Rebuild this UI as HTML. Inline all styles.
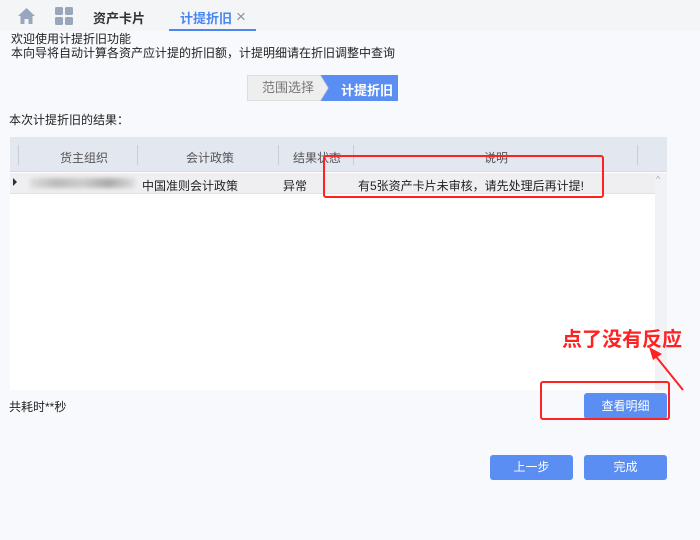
<!DOCTYPE html>
<html><head><meta charset="utf-8"><style>
*{margin:0;padding:0;box-sizing:border-box}
body{width:700px;height:540px;background:#f8f9fc;font-family:"Liberation Sans","Noto Sans CJK SC",sans-serif;font-size:12px;color:#222;position:relative;overflow:hidden}
.a{position:absolute}
.btn{position:absolute;background:#5b8ef2;color:#fff;border-radius:3px;text-align:center;font-size:12px}
.red{position:absolute;border:2.5px solid #f22;border-radius:3px}
</style></head><body>
<div class="a" style="left:0;top:0;width:700px;height:31px;background:#f4f5f7"></div>
<svg class="a" style="left:17px;top:7px" width="19" height="18" viewBox="0 0 19 18"><path d="M9.5 1 L1 9 H3.5 V17 H7.5 V12 H11.5 V17 H15.5 V9 H18 Z" fill="#9aa6bd"/></svg>
<svg class="a" style="left:55px;top:7px" width="18" height="18"><rect x="0" y="0" width="8" height="8" rx="1.5" fill="#9aa6bd"/><rect x="10" y="0" width="8" height="8" rx="1.5" fill="#9aa6bd"/><rect x="0" y="10" width="8" height="8" rx="1.5" fill="#9aa6bd"/><rect x="10" y="10" width="8" height="8" rx="1.5" fill="#9aa6bd"/></svg>
<div class="a" style="left:93px;top:8px;font-size:13px;font-weight:bold;color:#333">资产卡片</div>
<div class="a" style="left:180px;top:8px;font-size:13px;font-weight:bold;color:#4a86ef">计提折旧</div>
<div class="a" style="left:236px;top:7px;font-size:17px;line-height:20px;color:#8a93a3">×</div>
<div class="a" style="left:169px;top:29px;width:87px;height:2px;background:#4e86f0"></div>
<div class="a" style="left:11px;top:32px;line-height:14px">欢迎使用计提折旧功能<br>本向导将自动计算各资产应计提的折旧额，计提明细请在折旧调整中查询</div>
<div class="a" style="left:247px;top:75px;width:80px;height:26px;background:#eeeeee;border:1px solid #ddd;color:#777;font-size:13px;line-height:24px;padding-left:14px">范围选择</div>
<svg class="a" style="left:320px;top:75px" width="82" height="26"><path d="M0 0 L78 0 L78 26 L0 26 L8 13 Z" fill="#5b8ef2"/><path d="M0 0 L8 13 L0 26" fill="#eee" stroke="#ddd"/></svg>
<div class="a" style="left:341px;top:80px;color:#fff;font-size:13px;font-weight:bold">计提折旧</div>
<div class="a" style="left:9px;top:111px">本次计提折旧的结果：</div>
<div class="a" style="left:10px;top:137px;width:657px;height:253px;background:#fff"></div>
<div class="a" style="left:10px;top:137px;width:657px;height:35px;background:#e3e7ef;border-bottom:1px solid #d6dae2"></div>
<div class="a" style="left:18px;top:145px;width:1px;height:20px;background:#c8cdd6"></div>
<div class="a" style="left:137px;top:145px;width:1px;height:20px;background:#c8cdd6"></div>
<div class="a" style="left:278px;top:145px;width:1px;height:20px;background:#c8cdd6"></div>
<div class="a" style="left:353px;top:145px;width:1px;height:20px;background:#c8cdd6"></div>
<div class="a" style="left:637px;top:145px;width:1px;height:20px;background:#c8cdd6"></div>
<div class="a" style="left:60px;top:149px;color:#555">货主组织</div>
<div class="a" style="left:186px;top:149px;color:#555">会计政策</div>
<div class="a" style="left:293px;top:149px;color:#555">结果状态</div>
<div class="a" style="left:484px;top:149px;color:#555">说明</div>
<div class="a" style="left:10px;top:173px;width:645px;height:21px;background:#efeff1;border-bottom:1px solid #e2e2e2"></div>
<div class="a" style="left:13px;top:178px;width:0;height:0;border-left:4px solid #234;border-top:4px solid transparent;border-bottom:4px solid transparent"></div>
<div class="a" style="left:30px;top:178px;width:105px;height:10px;background:linear-gradient(90deg,#ddd,#bbb,#ccc,#aaa,#ddd);filter:blur(2px)"></div>
<div class="a" style="left:142px;top:177px">中国准则会计政策</div>
<div class="a" style="left:283px;top:177px">异常</div>
<div class="a" style="left:358px;top:177px">有5张资产卡片未审核，请先处理后再计提!</div>
<div class="a" style="left:655px;top:173px;width:12px;height:217px;background:#f0f2f6"></div>
<div class="a" style="left:656px;top:174px;font-size:9px;color:#aaa">^</div>
<div class="red" style="left:323px;top:155px;width:281px;height:43px"></div>
<div class="a" style="left:9px;top:398px">共耗时**秒</div>
<div class="btn" style="left:584px;top:393px;width:83px;height:26px;line-height:26px">查看明细</div>
<div class="red" style="left:540px;top:381px;width:130px;height:39px"></div>
<div class="a" style="left:562px;top:323px;font-size:20px;color:#f22;font-weight:bold">点了没有反应</div>
<svg class="a" style="left:640px;top:340px" width="50" height="55"><line x1="43" y1="50" x2="14" y2="14" stroke="#f22" stroke-width="2"/><path d="M9 7 L22 14 L13 20 Z" fill="#f22"/></svg>
<div class="btn" style="left:490px;top:455px;width:83px;height:25px;line-height:25px">上一步</div>
<div class="btn" style="left:584px;top:455px;width:83px;height:25px;line-height:25px">完成</div>
</body></html>
